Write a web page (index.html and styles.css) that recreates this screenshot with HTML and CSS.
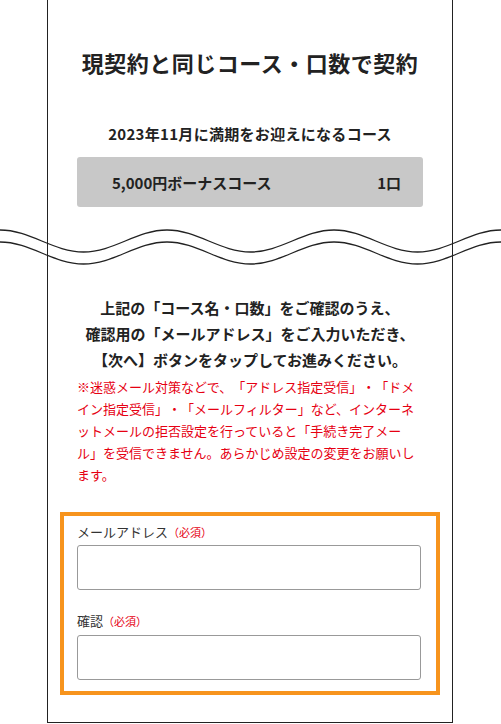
FILE: index.html
```html
<!DOCTYPE html>
<html lang="ja">
<head>
    <meta charset="UTF-8">
    <title>現契約と同じコース・口数で契約</title>
    <link rel="stylesheet" href="styles.css">
</head>
<body>
    <div class="frame">
        <h1 class="title">現契約と同じコース・口数で契約</h1>

        <section class="course">
            <p class="course-note">2023年11月に満期をお迎えになるコース</p>
            <div class="course-box">
                <span>5,000円ボーナスコース</span>
                <span>1口</span>
            </div>
        </section>

        <!-- page break mark -->
        <svg class="wave" width="501" height="50" viewBox="0 0 501 50">
            <path d="M0 8 C30.4 8 53.1 30 83.5 30 S136.6 8 167 8 S220.1 30 250.5 30 S303.6 8 334 8 S387.1 30 417.5 30 S470.6 8 501 8" />
            <path d="M0 20 C30.4 20 53.1 42 83.5 42 S136.6 20 167 20 S220.1 42 250.5 42 S303.6 20 334 20 S387.1 42 417.5 42 S470.6 20 501 20" />
        </svg>

        <section class="guide">
            <p class="guide-lead">上記の「コース名・口数」をご確認のうえ、<br>確認用の「メールアドレス」をご入力いただき、<br>【次へ】ボタンをタップしてお進みください。</p>
            <p class="guide-warn">※迷惑メール対策などで、「アドレス指定受信」・「ドメイン指定受信」・「メールフィルター」など、インターネットメールの拒否設定を行っていると「手続き完了メール」を受信できません。あらかじめ設定の変更をお願いします。</p>
        </section>

        <form class="mail-form">
            <label class="field-label" for="mail">メールアドレス<span class="req">（必須）</span></label>
            <input class="field-input" id="mail" type="email">
            <label class="field-label second" for="mail2">確認<span class="req">（必須）</span></label>
            <input class="field-input" id="mail2" type="email">
        </form>
    </div>
</body>
</html>
```

FILE: styles.css
```css
body {
    margin: 0;
    background: #fff;
    color: #222;
    font-family: 'Noto Sans CJK JP', 'Noto Sans', sans-serif;
    text-spacing-trim: space-all;
}
.frame {
    margin-left: 47px;
    width: 406px;
    box-sizing: border-box;
    border: 1px solid #222;
    border-top: none;
    padding: 46px 12px 27px;
}
.title {
    margin: 0;
    font-size: 22px;
    line-height: 32px;
    font-weight: 700;
    letter-spacing: 0.5px;
    text-align: center;
}
.course {
    padding: 0 17px;
    margin-top: 45px;
}
.course-note {
    margin: 0;
    font-size: 15px;
    line-height: 22px;
    font-weight: 700;
    letter-spacing: 0.3px;
    text-align: center;
}
.course-box {
    margin-top: 12px;
    height: 50px;
    display: flex;
    align-items: center;
    justify-content: space-between;
    padding: 0 22px 0 35px;
    background: #c8c8c8;
    border-radius: 3px;
    font-size: 15px;
    font-weight: 700;
}
.wave {
    display: block;
    margin: 15px 0 0 -60px;
}
.wave path {
    fill: none;
    stroke: #222;
    stroke-width: 1.3;
}
.guide {
    padding: 0 17px;
    margin-top: 23px;
}
.guide-lead {
    margin: 0;
    font-size: 15px;
    line-height: 26px;
    font-weight: 700;
    text-align: center;
}
.guide-warn {
    margin: 3px 0 0;
    font-size: 13px;
    line-height: 22px;
    color: #e60012;
}
.mail-form {
    margin-top: 26px;
    border: 4px solid #f7941d;
    padding: 6px 15px 11px 13px;
}
.field-label {
    display: block;
    font-size: 13px;
    line-height: 20px;
    color: #333;
}
.field-label.second {
    margin-top: 21px;
}
.req {
    font-size: 11px;
    color: #e60012;
}
.field-input {
    display: block;
    box-sizing: border-box;
    width: 100%;
    height: 45px;
    margin: 3px 0 0;
    border: 1px solid #999;
    border-radius: 3px;
    background: #fff;
}
.second + .field-input {
    margin-top: 4px;
}
```
